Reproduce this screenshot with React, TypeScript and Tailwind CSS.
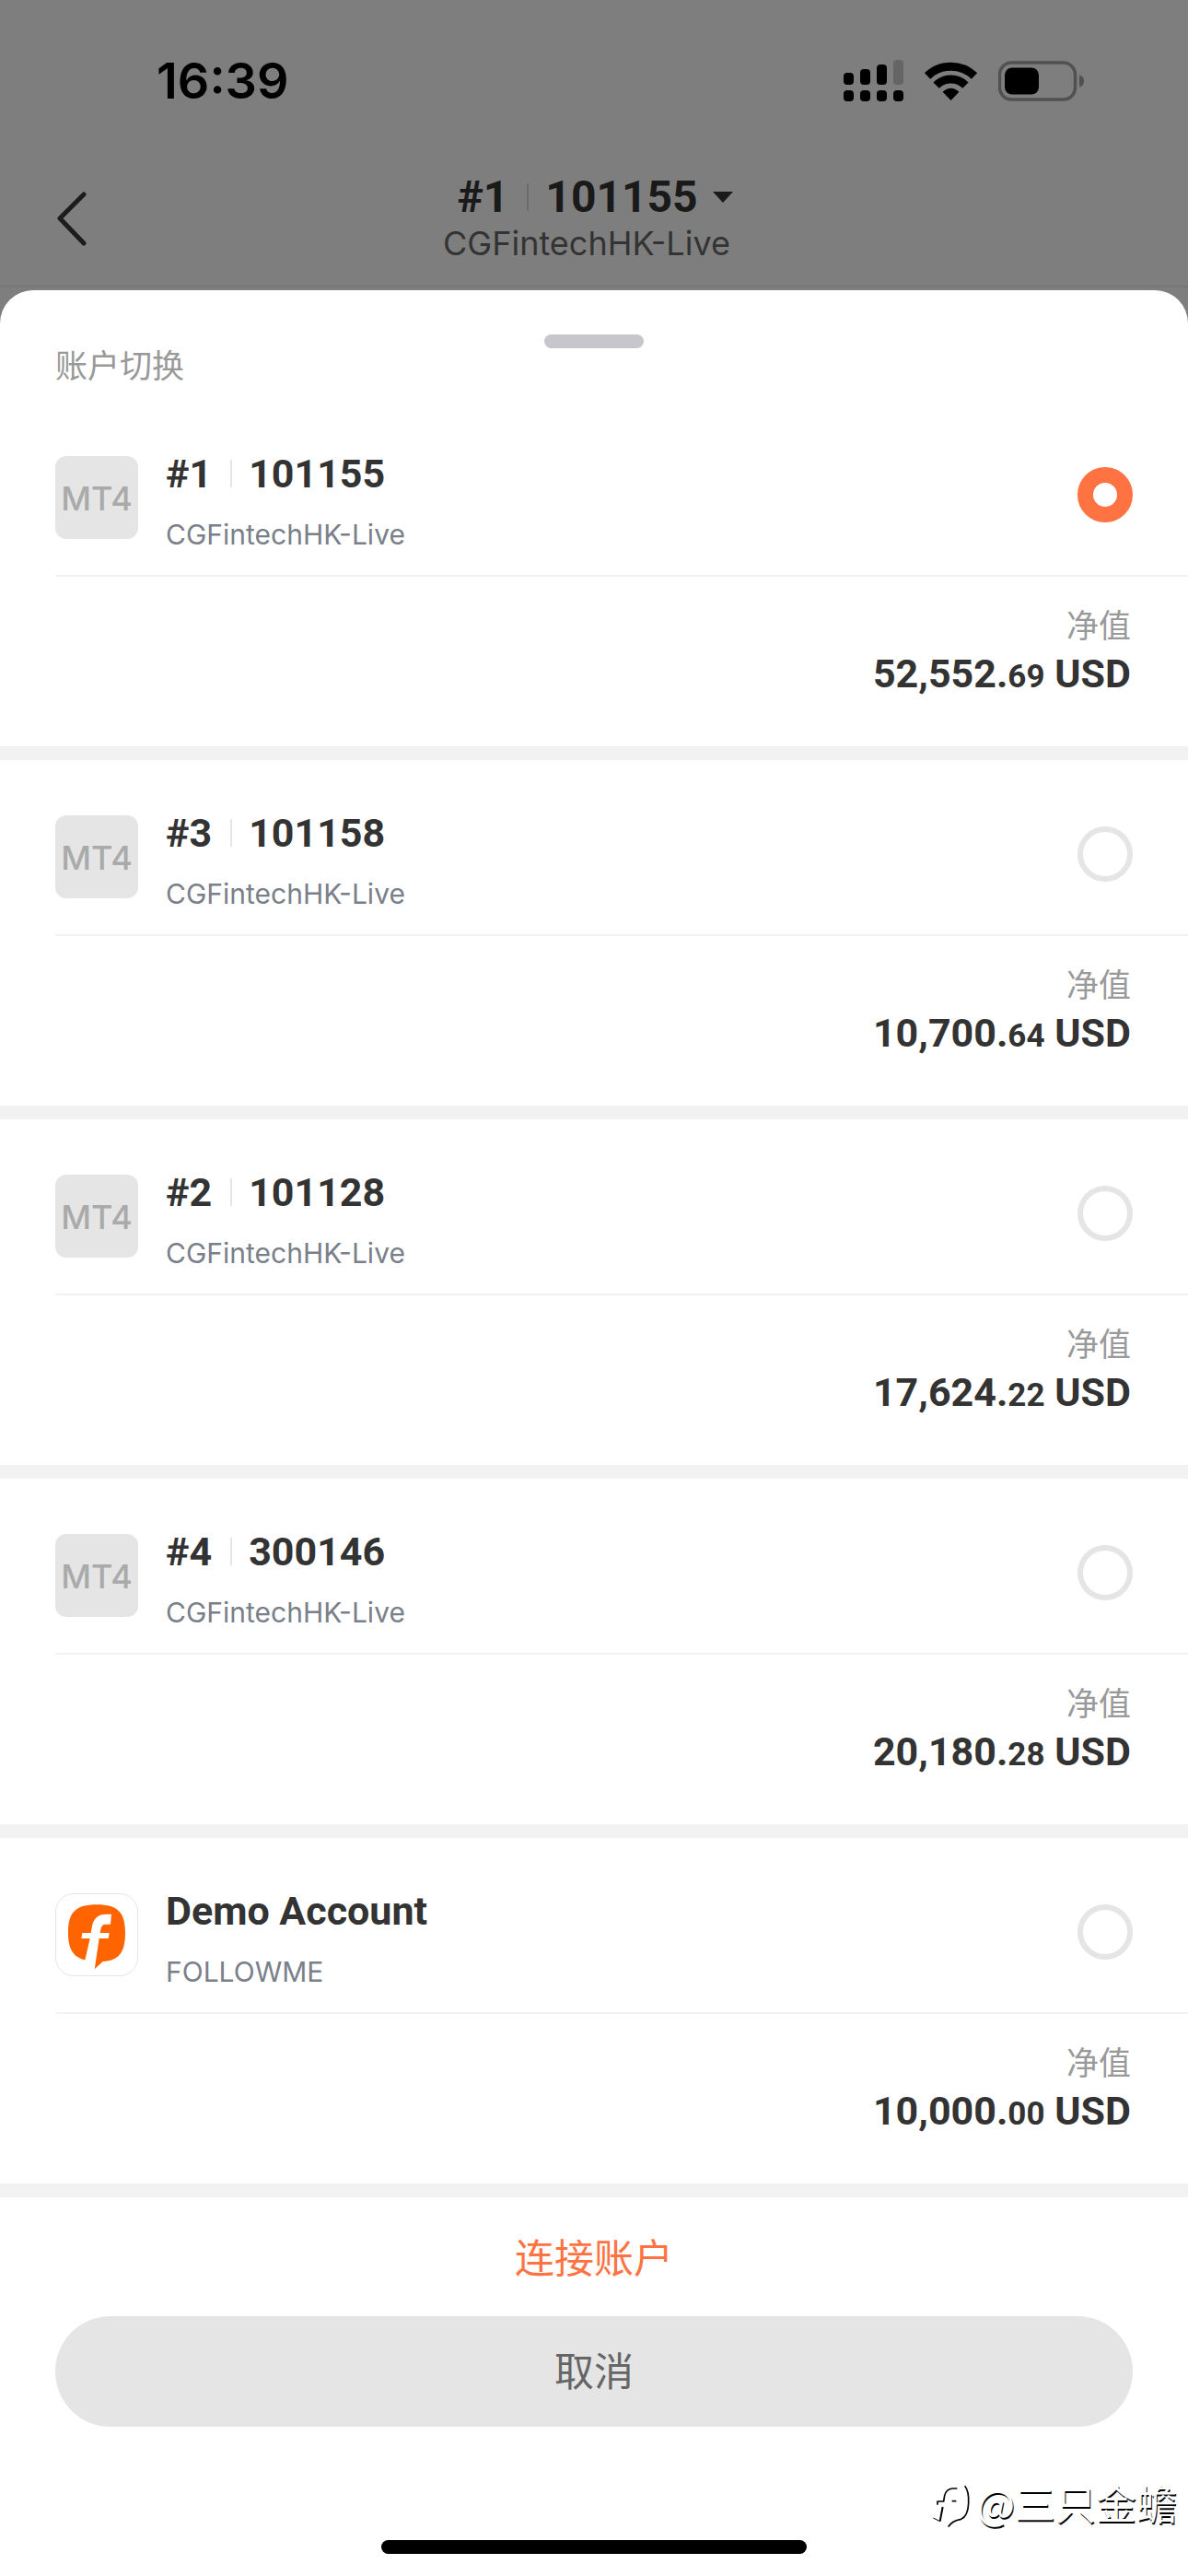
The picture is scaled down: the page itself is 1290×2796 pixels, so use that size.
import { useState } from 'react'
import clsx from 'clsx'

type Account = {
  id: string
  tag?: string
  name: string
  server: string
  whole: string
  cents: string
}

const ACCOUNTS: Account[] = [
  { id: 'a1', tag: '#1', name: '101155', server: 'CGFintechHK-Live', whole: '52,552.', cents: '69' },
  { id: 'a3', tag: '#3', name: '101158', server: 'CGFintechHK-Live', whole: '10,700.', cents: '64' },
  { id: 'a2', tag: '#2', name: '101128', server: 'CGFintechHK-Live', whole: '17,624.', cents: '22' },
  { id: 'a4', tag: '#4', name: '300146', server: 'CGFintechHK-Live', whole: '20,180.', cents: '28' },
  { id: 'demo', name: 'Demo Account', server: 'FOLLOWME', whole: '10,000.', cents: '00' },
]

export default function App() {
  const [selected, setSelected] = useState('a1')

  return (
    <div className="flex min-h-screen flex-col bg-[#7e7e7e] font-['Inter','Noto_Sans_CJK_SC',sans-serif]">
      <StatusBar />
      <NavBar />

      {/* Account sheet */}
      <main className="relative flex flex-1 flex-col rounded-t-[36px] bg-white">
        <div className="flex h-[120px] flex-col">
          <div className="mx-auto mt-12 h-[15px] w-[108px] shrink-0 rounded-full bg-[#c7c6cc]" />
          <h2 className="px-[60px] text-[35px] leading-[38px] text-[#999999]">账户切换</h2>
        </div>

        <div role="radiogroup" aria-label="账户切换">
          {ACCOUNTS.map((account) => (
            <AccountRow
              key={account.id}
              account={account}
              checked={selected === account.id}
              onSelect={() => setSelected(account.id)}
            />
          ))}
        </div>

        <div className="flex flex-col px-[60px] pt-[34px]">
          <button className="mx-auto text-[43px] leading-[64px] text-[#ff7241]">连接账户</button>
          <button className="mt-[31px] h-[120px] rounded-full bg-[#e5e5e5] text-[43px] text-[#666666]">取消</button>
        </div>

        <div className="mx-auto mt-auto mb-6 h-[15px] w-[462px] rounded-full bg-black" />

        <Watermark />
      </main>
    </div>
  )
}

function StatusBar() {
  return (
    <div className="flex h-44 items-center justify-between pr-28 pl-[170px]">
      <span className="text-[54px] leading-[64px] font-semibold text-black">16:39</span>
      <div className="flex items-center gap-[23px]">
        <svg width="65" height="46" viewBox="0 0 65 46">
          <rect x="0" y="14" width="11" height="13" rx="4" />
          <rect x="18" y="10" width="11" height="17" rx="4" />
          <rect x="36" y="5" width="11" height="22" rx="4" />
          <rect x="54" y="0" width="11" height="27" rx="4" fill="#656565" />
          <rect x="0" y="33" width="11" height="12" rx="4" />
          <rect x="18" y="33" width="11" height="12" rx="4" />
          <rect x="36" y="33" width="11" height="12" rx="4" />
          <rect x="54" y="33" width="11" height="12" rx="4" />
        </svg>
        <svg width="57" height="44" viewBox="0 0 57 44" fill="none" stroke="black" strokeWidth="9">
          <path d="M3 16.4A37 37 0 0 1 54 16.4" />
          <path d="M12.6 26.6A22.5 22.5 0 0 1 44.4 26.6" />
          <path d="M28.5 43 19.6 33.8Q28.5 25.5 37.4 33.8Z" fill="black" stroke="none" />
        </svg>
        <svg width="94" height="44" viewBox="0 0 94 44">
          <rect x="1.5" y="2" width="82" height="40" rx="13" fill="none" stroke="#515151" strokeWidth="3.5" />
          <rect x="7" y="7.500" width="37" height="29" rx="8" />
          <path d="M88 15.500c4 1 5 4 5 6.500s-1 5.500-5 6.500Z" fill="#515151" />
        </svg>
      </div>
    </div>
  )
}

function NavBar() {
  return (
    <header className="mb-[3px] grid grid-cols-[1fr_auto_1fr] items-center border-b-2 border-[#777777] pt-3 pb-[22px]">
      <button aria-label="返回" className="ml-[58px] w-10">
        <svg width="40" height="60" viewBox="0 0 40 60" fill="none" stroke="#1c1c1c" strokeWidth="5" strokeLinecap="round" strokeLinejoin="round">
          <path d="M33 3 7 29 33 56" />
        </svg>
      </button>
      <button className="flex flex-col items-center pr-4">
        <span className="flex items-center pl-[18px] font-['Roboto',sans-serif] text-[48px] leading-[52px] font-bold text-[#1a1a1a]">
          #1
          <i className="mr-[18px] ml-5 h-[30px] w-[2px] bg-[#6c6c6c]" />
          101155
          <svg className="ml-4" width="22" height="12" viewBox="0 0 22 12" fill="#1a1a1a">
            <path d="M0 0h22L11 12Z" />
          </svg>
        </span>
        <span className="text-[36px] leading-[48px] text-[#333333]">CGFintechHK-Live</span>
      </button>
    </header>
  )
}

function AccountRow({ account, checked, onSelect }: { account: Account; checked: boolean; onSelect: () => void }) {
  return (
    <label className="block border-b-[15px] border-[#f2f2f2]">
      <div className="ml-[60px] flex h-[191px] items-start border-b-2 border-[#f2f2f2] pt-[54px] pr-[60px]">
        {account.tag ? (
          <span className="mt-[6px] flex size-[90px] items-center justify-center rounded-xl bg-[#e5e5e5] pt-[2px] text-[36px] font-medium text-[#aaaaaa]">
            MT4
          </span>
        ) : (
          <FollowmeLogo />
        )}
        <div className="ml-[30px] flex-1">
          <p className="flex items-center font-['Roboto',sans-serif] text-[43px] leading-[50px] font-bold text-[#333333]">
            {account.tag && (
              <>
                {account.tag}
                <i className="mr-[18px] ml-5 h-[30px] w-[2px] bg-[#e5e5e5]" />
              </>
            )}
            {account.name}
          </p>
          <p className="mt-[24px] text-[30px] leading-[34px] text-[#7a7f8a]">{account.server}</p>
        </div>
        <input
          type="radio"
          name="account"
          checked={checked}
          onChange={onSelect}
          className={clsx(
            'mt-[18px] size-[60px] appearance-none rounded-full bg-white',
            checked ? 'border-[17px] border-[#ff7241]' : 'border-[6px] border-[#e5e5e5]',
          )}
        />
      </div>
      <div className="flex flex-col items-end pt-[27px] pr-[62px] pb-[49px] leading-[52px]">
        <span className="text-[35px] text-[#999999]">净值</span>
        <span className="font-['Roboto',sans-serif] text-[43px] font-bold text-[#333333]">
          {account.whole}
          <span className="text-[35px]">{account.cents}</span> USD
        </span>
      </div>
    </label>
  )
}

function FollowmeLogo() {
  return (
    <svg className="mt-[6px] size-[90px] rounded-[20px] border border-[#e5e5e5]" viewBox="63 48 264 264">
      <path
        d="M195 82C263 82 288 106 288 175C288 238 266 265 215 267L188 292L157 262C120 254 102 228 102 175C102 106 127 82 195 82Z"
        fill="#ff6400"
      />
      <path
        d="M243 113L240 146H226C214 146 210 152 208 163L206 174H236L233 192H203L188 293H150L173 192H145L148 174H176L179 157C184 126 199 113 226 113Z"
        fill="white"
      />
    </svg>
  )
}

function Watermark() {
  return (
    <div className="absolute right-3 bottom-11 flex items-center gap-[6px]">
      <svg width="43" height="50" viewBox="80 75 129 150" fill="none" stroke="black" strokeLinejoin="round">
        <path d="M165 93H150Q129 95 124 116L121 135H101V146" strokeWidth="5" />
        <path d="M118 153 109 200" strokeWidth="6" />
        <path d="M109 200 87 189" strokeWidth="3" />
        <path d="M148 134H162" strokeWidth="5" />
        <path d="M190 85Q204 102 202 142Q200 184 178 193Q148 198 136 218" strokeWidth="5" />
      </svg>
      <span className="pb-2 font-['Noto_Sans_CJK_SC',sans-serif] text-[44px] leading-[56px] text-white [text-shadow:1px_2px_0_#000]">
        @三只金蟾
      </span>
    </div>
  )
}
